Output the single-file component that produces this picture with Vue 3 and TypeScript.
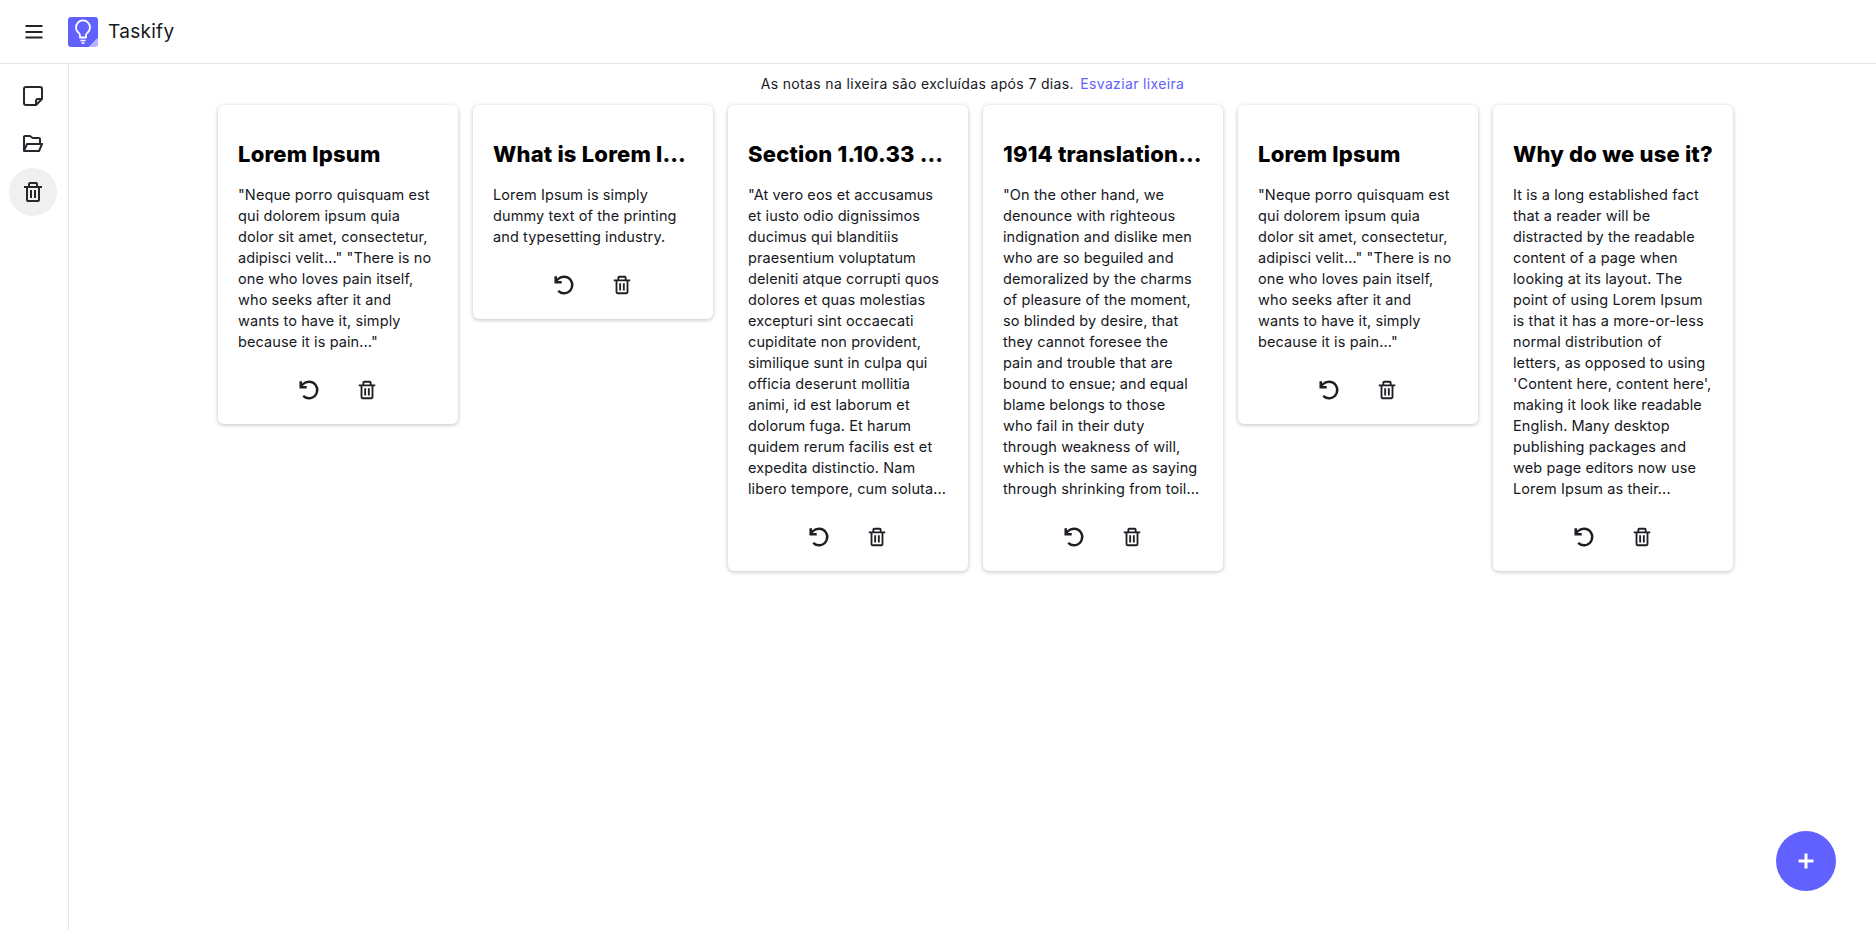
<template>
  <div class="page">
    <header class="topbar">
      <button class="menu-btn" aria-label="menu">
        <svg viewBox="0 0 24 24" width="24" height="24"><path d="M3.500 6h17M3.500 12h17M3.500 17.500h17" fill="none" stroke="#222429" stroke-width="1.800" /></svg>
      </button>
      <svg class="logo" viewBox="0 0 30 30" width="30" height="30">
        <path d="M3 0h24a3 3 0 0 1 3 3v18l-9 9H3a3 3 0 0 1-3-3V3a3 3 0 0 1 3-3z" fill="#6161ff" />
        <path d="M30 21l-9 9h6a3 3 0 0 0 3-3z" fill="#b5b5ff" />
        <path d="M12 20.500v-2.200c0-1-.6-1.700-1.500-2.600a7 7 0 1 1 9 0c-.9.9-1.500 1.600-1.500 2.600v2.200z" fill="none" stroke="#fff" stroke-width="1.800" stroke-linejoin="round" />
        <path d="M12.500 23.500h5M13.500 26h3" stroke="#fff" stroke-width="1.600" fill="none" />
      </svg>
      <span class="brand">Taskify</span>
    </header>
    <div class="body">
      <aside class="sidebar">
        <div class="side-item">
          <svg viewBox="0 0 24 24" width="24" height="24"><path d="M5 3h14a2 2 0 0 1 2 2v10l-6 6H5a2 2 0 0 1-2-2V5a2 2 0 0 1 2-2z M21 15h-4a2 2 0 0 0-2 2v4" fill="none" stroke="#26282e" stroke-width="2" stroke-linejoin="round" /></svg>
        </div>
        <div class="side-item">
          <svg viewBox="0 0 24 24" width="24" height="24"><path d="M2.165 19.551c.186.28.499.449.835.449h15c.4 0 .762-.238.919-.606l3-7A.998.998 0 0 0 21 11h-1V7c0-1.103-.897-2-2-2h-6.100L9.616 3.213A.997.997 0 0 0 9 3H4c-1.103 0-2 .897-2 2v14h.007a1 1 0 0 0 .158.551zM17.341 18H4.517l2.143-5h12.824l-2.143 5zM18 7v4H6c-.4 0-.762.238-.919.606L4 14.129V5h4.655l2.651 1.800c.166.130.368.200.594.200H18z" fill="#26282e" /></svg>
        </div>
        <div class="side-item active">
          <svg viewBox="0 0 24 24" width="24" height="24"><path d="M5 20a2 2 0 0 0 2 2h10a2 2 0 0 0 2-2V8h2V6h-4V4a2 2 0 0 0-2-2H9a2 2 0 0 0-2 2v2H3v2h2zM9 4h6v2H9zM8 8h9v12H7V8z" fill="#26282e" /><path d="M9 10h2v8H9zm4 0h2v8h-2z" fill="#26282e" /></svg>
        </div>
      </aside>
      <main class="content">
        <p class="notice">As notas na lixeira são excluídas após 7 dias. <a class="empty-link">Esvaziar lixeira</a></p>
        <div class="grid">
          <article v-for="(note, i) in notes" :key="i" class="card">
            <h2 class="card-title">{{ note.title }}</h2>
            <p class="card-text"><span v-for="(line, j) in note.lines" :key="j" class="line">{{ line }}</span></p>
            <div class="card-actions">
              <svg viewBox="0 0 24 24" width="22" height="22"><path d="M5.640 18.360A9 9 0 1 0 12 3a9.750 9.750 0 0 0-6.740 2.740L3 8" fill="none" stroke="#1d1f24" stroke-width="2.600" /><path d="M3 2.500v6.500h6.500" fill="none" stroke="#1d1f24" stroke-width="2.800" /></svg>
              <svg viewBox="0 0 24 24" width="22" height="22"><path d="M5 20a2 2 0 0 0 2 2h10a2 2 0 0 0 2-2V8h2V6h-4V4a2 2 0 0 0-2-2H9a2 2 0 0 0-2 2v2H3v2h2zM9 4h6v2H9zM8 8h9v12H7V8z" fill="#1d1f24" /><path d="M9 10h2v8H9zm4 0h2v8h-2z" fill="#1d1f24" /></svg>
            </div>
          </article>
        </div>
      </main>
    </div>
    <button class="fab" aria-label="add">
      <svg viewBox="0 0 24 24" width="24" height="24"><path d="M12 4.500v15M4.500 12h15" stroke="#fff" stroke-width="3" fill="none" /></svg>
    </button>
  </div>
</template>

<script setup lang="ts">
interface Note {
  title: string
  lines: string[]
}

const lorem: Note = {
  title: 'Lorem Ipsum',
  lines: [
    '"Neque porro quisquam est',
    'qui dolorem ipsum quia',
    'dolor sit amet, consectetur,',
    'adipisci velit..." "There is no',
    'one who loves pain itself,',
    'who seeks after it and',
    'wants to have it, simply',
    'because it is pain..."'
  ]
}

const notes: Note[] = [
  lorem,
  {
    title: 'What is Lorem Ipsum?',
    lines: ['Lorem Ipsum is simply', 'dummy text of the printing', 'and typesetting industry.']
  },
  {
    title: 'Section 1.10.33 of de Finibus',
    lines: [
      '"At vero eos et accusamus',
      'et iusto odio dignissimos',
      'ducimus qui blanditiis',
      'praesentium voluptatum',
      'deleniti atque corrupti quos',
      'dolores et quas molestias',
      'excepturi sint occaecati',
      'cupiditate non provident,',
      'similique sunt in culpa qui',
      'officia deserunt mollitia',
      'animi, id est laborum et',
      'dolorum fuga. Et harum',
      'quidem rerum facilis est et',
      'expedita distinctio. Nam',
      'libero tempore, cum soluta...'
    ]
  },
  {
    title: '1914 translation by H. Rackham',
    lines: [
      '"On the other hand, we',
      'denounce with righteous',
      'indignation and dislike men',
      'who are so beguiled and',
      'demoralized by the charms',
      'of pleasure of the moment,',
      'so blinded by desire, that',
      'they cannot foresee the',
      'pain and trouble that are',
      'bound to ensue; and equal',
      'blame belongs to those',
      'who fail in their duty',
      'through weakness of will,',
      'which is the same as saying',
      'through shrinking from toil...'
    ]
  },
  lorem,
  {
    title: 'Why do we use it?',
    lines: [
      'It is a long established fact',
      'that a reader will be',
      'distracted by the readable',
      'content of a page when',
      'looking at its layout. The',
      'point of using Lorem Ipsum',
      'is that it has a more-or-less',
      'normal distribution of',
      'letters, as opposed to using',
      "'Content here, content here',",
      'making it look like readable',
      'English. Many desktop',
      'publishing packages and',
      'web page editors now use',
      'Lorem Ipsum as their...'
    ]
  }
]
</script>

<style>
html, body {
  background: #fff;
}
</style>

<style scoped>
.page {
  height: 930px;
  overflow: hidden;
  display: flex;
  flex-direction: column;
  font-family: Inter, "Noto Sans", sans-serif;
  color: #16181d;
}
.topbar {
  height: 64px;
  box-sizing: border-box;
  flex: none;
  display: flex;
  align-items: center;
  border-bottom: 1px solid #e6e6e6;
  padding-left: 22px;
}
.menu-btn {
  width: 24px;
  height: 24px;
  padding: 0;
  border: 0;
  background: none;
  display: flex;
  margin-right: 22px;
}
.logo {
  margin-right: 10px;
}
.brand {
  font-size: 19px;
  letter-spacing: 0.3px;
}
.body {
  flex: 1;
  display: flex;
}
.sidebar {
  width: 69px;
  box-sizing: border-box;
  border-right: 1px solid #e6e6e6;
  padding: 8px 2px 0 0;
  display: flex;
  flex-direction: column;
  align-items: center;
}
.side-item {
  width: 48px;
  height: 48px;
  border-radius: 50%;
  display: flex;
  align-items: center;
  justify-content: center;
}
.active {
  background: #f0f0f0;
}
.content {
  flex: 1;
  min-width: 0;
}
.notice {
  margin: 0;
  height: 41px;
  padding-top: 10px;
  box-sizing: border-box;
  text-align: center;
  font-size: 14px;
  line-height: 20px;
  letter-spacing: 0.35px;
}
.empty-link {
  color: #6161ff;
  margin-left: 2px;
}
.grid {
  display: grid;
  grid-template-columns: repeat(6, 240px);
  column-gap: 15px;
  align-items: start;
  margin-left: 149px;
}
.card {
  border-radius: 6px;
  background: #fff;
  box-shadow: 0 1px 4px rgba(0, 0, 0, 0.25);
  padding: 20px;
}
.card-title {
  margin: 12px 0 13px;
  font-size: 22px;
  line-height: 34px;
  font-weight: 800;
  letter-spacing: 0.2px;
  color: #000;
  white-space: nowrap;
  overflow: hidden;
  text-overflow: ellipsis;
}
.card-text {
  margin: 0;
  font-size: 14.5px;
  line-height: 21px;
  letter-spacing: 0.1px;
}
.line {
  display: block;
  white-space: nowrap;
}
.card-actions {
  display: flex;
  justify-content: center;
  align-items: center;
  gap: 36px;
  margin-top: 20px;
  height: 36px;
  margin-bottom: -4px;
}
.fab {
  position: absolute;
  left: 1776px;
  top: 831px;
  width: 60px;
  height: 60px;
  border: 0;
  border-radius: 50%;
  background: #6161ff;
  display: flex;
  align-items: center;
  justify-content: center;
  padding: 0;
}
</style>
